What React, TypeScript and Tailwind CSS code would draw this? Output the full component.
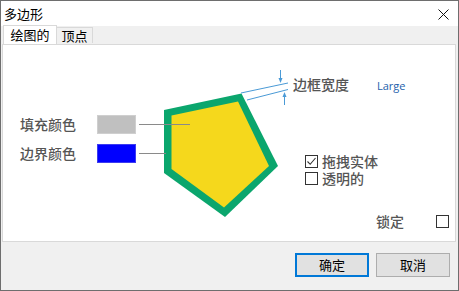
import React from "react";

const cjk = { fontFamily: '"Microsoft YaHei", "Noto Sans CJK SC", sans-serif' };

function Check({ checked }: { checked?: boolean }) {
  return (
    <div className="w-[13px] h-[13px] border border-[#333333] bg-white flex items-center justify-center">
      {checked && (
        <svg width="11" height="11" viewBox="0 0 11 11">
          <path d="M1.5 5.5 L4.2 8.3 L9.5 2" fill="none" stroke="#333" strokeWidth="1.1" />
        </svg>
      )}
    </div>
  );
}

export default function App() {
  return (
    <div
      className="w-[459px] h-[291px] border border-[#6e6e6e] bg-[#f0f0f0] flex flex-col text-[#555555]"
      style={cjk}
    >
      {/* title bar */}
      <div className="h-[25px] bg-white flex items-center justify-between pl-[3px] pr-[9px] shrink-0">
        <span className="text-[13px] text-black leading-none">多边形</span>
        <svg width="11" height="11" viewBox="0 0 11 11" className="mt-[1px]">
          <path d="M0.5 0.5 L10.5 10.5 M10.5 0.5 L0.5 10.5" stroke="#111" strokeWidth="1" />
        </svg>
      </div>
      {/* tabs */}
      <div className="h-[18px] flex items-end pl-[2px] shrink-0 relative z-10">
        <div className="h-[19px] w-[54px] bg-white border border-b-0 border-[#d9d9d9] flex items-center justify-center text-[13px] text-black">
          绘图的
        </div>
        <div className="h-[16px] w-[36px] mb-[1px] bg-[#f0f0f0] border border-l-0 border-b-0 border-[#d9d9d9] flex items-center justify-center text-[13px] text-black">
          顶点
        </div>
      </div>
      {/* panel */}
      <div className="ml-[1px] w-[454px] h-[198px] border border-[#d9d9d9] bg-white relative shrink-0">
        <svg className="absolute left-0 top-0" width="452" height="196" viewBox="0 0 452 196">
          <polygon points="161,65 238.5,48.5 275,121 222,172 161,128" fill="#0ba66d" />
          <polygon points="168.5,70.5 235,56.5 266,121 221,162.5 168.5,124" fill="#f5d81c" />
          <line x1="136" y1="79.5" x2="187" y2="79.5" stroke="#8a8a8a" strokeWidth="1" />
          <line x1="136" y1="108.5" x2="163" y2="108.5" stroke="#8a8a8a" strokeWidth="1" />
          <line x1="238" y1="48" x2="285" y2="38" stroke="#4a9ad6" strokeWidth="1" />
          <line x1="244" y1="55" x2="285" y2="44.5" stroke="#4a9ad6" strokeWidth="1" />
          <line x1="277.5" y1="25" x2="277.5" y2="35" stroke="#4a9ad6" strokeWidth="1" />
          <polygon points="275.5,33 279.5,33 277.5,38" fill="#4a9ad6" />
          <line x1="281.5" y1="60" x2="281.5" y2="50" stroke="#4a9ad6" strokeWidth="1" />
          <polygon points="279.5,52 283.5,52 281.5,47" fill="#4a9ad6" />
        </svg>

        <div className="absolute left-[17px] top-[69px] flex flex-col gap-[9px]">
          <div className="flex items-center h-[20px]">
            <span className="w-[77px] text-[14px] font-medium leading-[20px]">填充颜色</span>
            <div className="w-[39px] h-[19px] bg-[#c0c0c0] border border-[#cfcfcf]" />
          </div>
          <div className="flex items-center h-[20px]">
            <span className="w-[77px] text-[14px] font-medium leading-[20px]">边界颜色</span>
            <div className="w-[39px] h-[19px] bg-[#0000ff] border border-[#3c3cf0]" />
          </div>
        </div>

        <div className="absolute left-[290px] top-[29px] flex items-center h-[20px]">
          <span className="text-[14px] font-medium leading-[20px]">边框宽度</span>
          <span
            className="ml-[28px] mt-[4px] text-[11px] text-[#2461ab]"
            style={{ fontFamily: '"Open Sans", "Liberation Sans", sans-serif' }}
          >
            Large
          </span>
        </div>

        <div className="absolute left-[302px] top-[109px] flex flex-col gap-[3px]">
          <div className="flex items-center h-[14px] gap-[4px]">
            <Check checked />
            <span className="text-[14px] font-medium leading-[14px]">拖拽实体</span>
          </div>
          <div className="flex items-center h-[14px] gap-[4px]">
            <Check />
            <span className="text-[14px] font-medium leading-[14px]">透明的</span>
          </div>
        </div>

        <div className="absolute left-[373px] top-[166px] flex items-center h-[20px]">
          <span className="text-[14px] font-medium leading-[20px]">锁定</span>
          <div className="ml-[32px]">
            <Check />
          </div>
        </div>
      </div>
      {/* buttons */}
      <div className="flex justify-end gap-[7px] pr-[8px] pt-[11px]">
        <button className="w-[74px] h-[24px] border-2 border-[#0078d7] bg-[#e1e1e1] text-[13px] text-black flex items-center justify-center">
          确定
        </button>
        <button className="w-[74px] h-[24px] border border-[#adadad] bg-[#e1e1e1] text-[13px] text-black flex items-center justify-center">
          取消
        </button>
      </div>
    </div>
  );
}
